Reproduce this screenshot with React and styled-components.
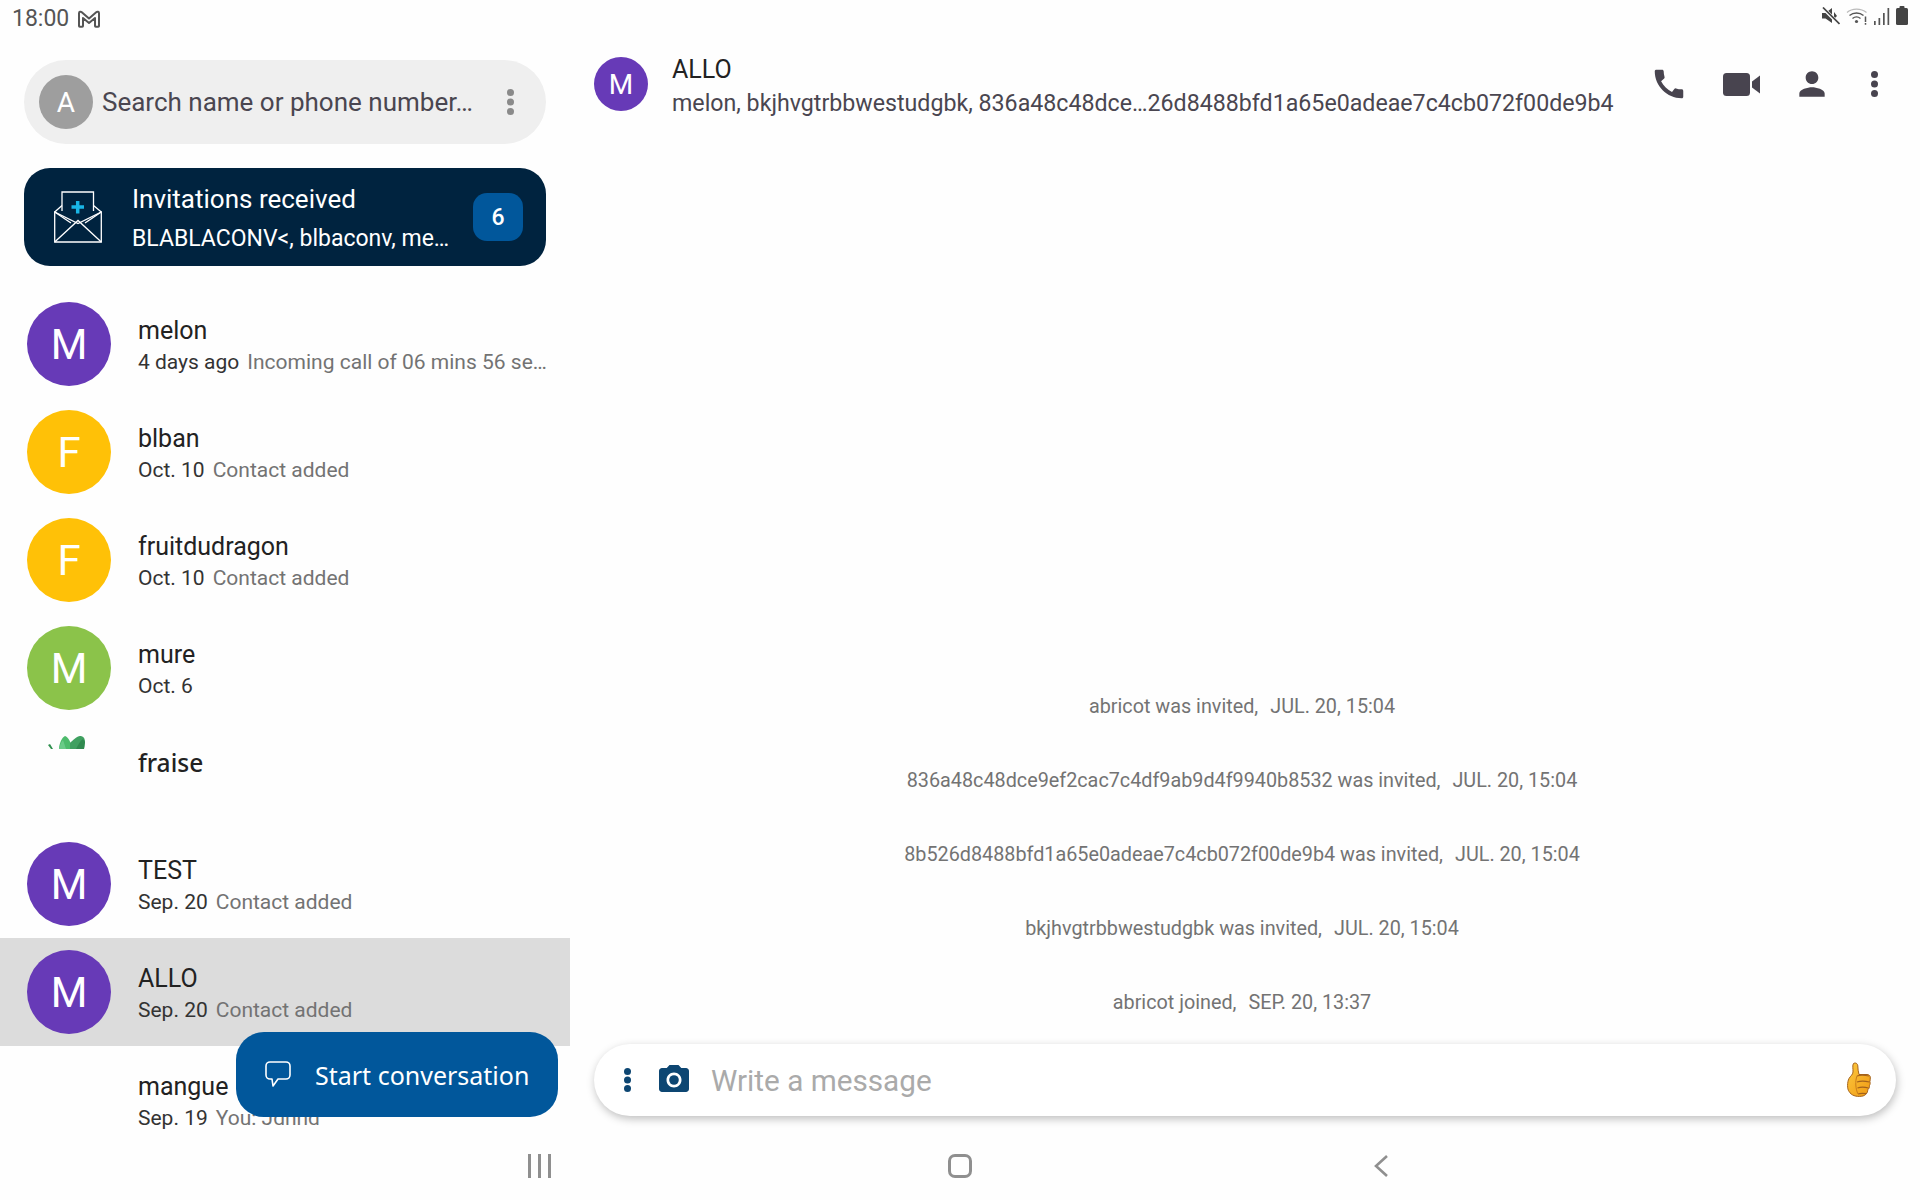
import React from "react";
import styled, { createGlobalStyle } from "styled-components";
import { MdCall, MdPerson, MdPhotoCamera } from "react-icons/md";

const GlobalStyle = createGlobalStyle`
  html, body { margin: 0; padding: 0; background: #fefefe; }
  * { box-sizing: border-box; }
  body { font-family: Roboto, "Liberation Sans", sans-serif; }
`;

const conversations = [
  { name: "melon", letter: "M", color: "#673ab7", date: "4 days ago", text: "Incoming call of 06 mins 56 se…" },
  { name: "blban", letter: "F", color: "#ffc107", date: "Oct. 10", text: "Contact added" },
  { name: "fruitdudragon", letter: "F", color: "#ffc107", date: "Oct. 10", text: "Contact added" },
  { name: "mure", letter: "M", color: "#8bc34a", date: "Oct. 6", text: "" },
  { name: "fraise", leaf: true, special: true },
  { name: "TEST", letter: "M", color: "#673ab7", date: "Sep. 20", text: "Contact added" },
  { name: "ALLO", letter: "M", color: "#673ab7", date: "Sep. 20", text: "Contact added", active: true },
  { name: "mangue", date: "Sep. 19", text: "You: Jdhhd" },
];

const events = [
  ["abricot was invited,", "JUL. 20, 15:04"],
  ["836a48c48dce9ef2cac7c4df9ab9d4f9940b8532 was invited,", "JUL. 20, 15:04"],
  ["8b526d8488bfd1a65e0adeae7c4cb072f00de9b4 was invited,", "JUL. 20, 15:04"],
  ["bkjhvgtrbbwestudgbk was invited,", "JUL. 20, 15:04"],
  ["abricot joined,", "SEP. 20, 13:37"],
];

function GmailIcon() {
  return (
    <svg width="24" height="20" viewBox="0 0 24 20" fill="none" stroke="#555" strokeWidth="2" strokeLinejoin="round">
      <path d="M2 17V4.200c0-1.600 1.700-2 2.800-1L12 9.500l7.200-6.300c1.100-1 2.800-.6 2.800 1V17c0 .5-.3.800-.8.800h-2.400c-.5 0-.8-.3-.8-.8V9L12 14 6 9v8c0 .5-.3.800-.8.800H2.800c-.5 0-.8-.3-.8-.8z" />
    </svg>
  );
}

function MuteIcon() {
  return (
    <svg width="18" height="18" viewBox="0 0 18 18">
      <path d="M0 6h3.500L10 1v15L3.500 11.500H0z" fill="#444" />
      <path d="M12 5l3 4-3 3z" fill="#444" />
      <path d="M1 1l16 16" stroke="#fefefe" strokeWidth="3.500" />
      <path d="M1 .5l16.500 16.500" stroke="#444" strokeWidth="1.700" />
    </svg>
  );
}

function WifiIcon() {
  return (
    <svg width="22" height="18" viewBox="0 0 22 18" fill="none">
      <path d="M1 5.500C6 1 15 1 20.500 5.500" stroke="#bbb" strokeWidth="1.300" />
      <path d="M3.500 8.500c4-3.300 10-3.300 14 0" stroke="#555" strokeWidth="1.400" />
      <path d="M6.500 11.500c2.500-2 5.500-2 8 0" stroke="#555" strokeWidth="1.400" />
      <circle cx="10.500" cy="14.500" r="1.600" fill="#555" />
      <path d="M19.500 9.500v5.500M19.500 16v1.800" stroke="#555" strokeWidth="1.500" />
    </svg>
  );
}

function SignalIcon() {
  return (
    <svg width="16" height="18" viewBox="0 0 16 18" fill="#555">
      <rect x="0" y="14" width="1.700" height="4" />
      <rect x="4.500" y="11" width="1.700" height="7" />
      <rect x="9" y="6" width="1.700" height="12" />
      <rect x="13.500" y="1" width="1.700" height="17" />
    </svg>
  );
}

function BatteryIcon() {
  return (
    <svg width="12" height="19" viewBox="0 0 12 19" fill="#444">
      <rect x="3.500" y="0" width="5" height="3" rx="1" />
      <rect x="0" y="2" width="12" height="17" rx="1.500" />
    </svg>
  );
}

function DotsIcon({ color, size = 7, height = 26 }) {
  return (
    <svg width={size} height={height} viewBox={`0 0 ${size} ${height}`} fill={color}>
      <circle cx={size / 2} cy={size / 2} r={size / 2} />
      <circle cx={size / 2} cy={height / 2} r={size / 2} />
      <circle cx={size / 2} cy={height - size / 2} r={size / 2} />
    </svg>
  );
}

function EnvelopeIcon() {
  return (
    <svg width="48" height="52" viewBox="0 0 48 52" fill="none" stroke="#fff" strokeWidth="1.300">
      <path d="M8 20V1h31.500v19" fill="#00233f" />
      <path d="M.7 21L8 14.500M47.300 21L39.500 14.500" />
      <path d="M.7 21v30h46.600V21L24 32.500z" />
      <path d="M.7 51L24 29.500 47.300 51M.7 21L17 32M47.300 21L31 32" />
      <path d="M17.500 16h12.500M23.700 10v12.500" stroke="#19b5e6" strokeWidth="3.500" />
    </svg>
  );
}

function BubbleIcon() {
  return (
    <svg width="26" height="27" viewBox="0 0 26 27" fill="none" stroke="#fff" strokeWidth="1.600" strokeLinejoin="round">
      <path d="M5 1h16c2.200 0 4 1.800 4 4v9c0 2.200-1.800 4-4 4H13l-5 7-1-7H5c-2.200 0-4-1.800-4-4V5c0-2.200 1.800-4 4-4z" />
    </svg>
  );
}

function VideoIcon() {
  return (
    <svg width="37" height="23" viewBox="0 0 37 23" fill="#48444f">
      <rect x="0" y="0" width="27" height="23" rx="3.500" />
      <path d="M29 8.500L37 2.500v18l-8-6z" />
    </svg>
  );
}

function ThumbIcon() {
  return (
    <svg width="24" height="36" viewBox="0 0 24 36">
      <defs>
        <linearGradient id="thumb" x1="0" y1="0" x2="1" y2="1">
          <stop offset="0" stopColor="#fdc93f" />
          <stop offset="1" stopColor="#f09a13" />
        </linearGradient>
      </defs>
      <path
        d="M6.500 1.500c2-1.200 4.200 0 4.300 2.500.1 2.500.4 5.800 1.200 8.500H20c2.200 0 3.500 1.500 3.300 3.500-.1 1 0 2.500-.4 3.500.5 1.500.3 3-.5 4.200.2 1.500-.4 3-1.600 4-.1 3-2 6-6 6.500-6 .8-10.500-.8-12.800-4.800C0 27 .2 20 2 16.500c1.500-2.500 3.800-3.800 4-6.500.2-3-.8-6.800.5-8.500z"
        fill="url(#thumb)"
        stroke="#a4621b"
        strokeWidth="1"
      />
      <path d="M10 14c2-1 8-1 12 0M10 20c3-1 8-1 12.500 0M10.500 26c3-1 7-1 11 0M11 32c2-.8 5-.8 8-.4" fill="none" stroke="#a4621b" strokeWidth="1.200" />
      <path d="M10 14c-2 5-1.500 13 1 18" fill="none" stroke="#c97d1b" strokeWidth="1" />
    </svg>
  );
}

function LeafIcon() {
  return (
    <svg width="38" height="14" viewBox="0 0 38 14">
      <path d="M0 10l2-1 3 5H3z" fill="#2f8f4e" />
      <path d="M11 14c0-5 3-12 6-13 3 1 5 5 6 8l-1 5z" fill="#4dbb6c" />
      <path d="M11 14c1-4 2-7 4-9l3 9z" fill="#6acb88" />
      <path d="M22 14V8c3-3 7-7 10-7s5 2 5 6l-1 7z" fill="#3fa060" />
      <path d="M28 14c2-4 4-8 7-10l2 3-1 7z" fill="#308a4f" />
    </svg>
  );
}

export default function App() {
  return (
    <Screen>
      <GlobalStyle />
      <StatusBar>
        <StatusLeft>
          <Clock>18:00</Clock>
          <GmailIcon />
        </StatusLeft>
        <StatusRight>
          <MuteIcon />
          <WifiIcon />
          <SignalIcon />
          <BatteryIcon />
        </StatusRight>
      </StatusBar>

      <Body>
        <Sidebar>
          <SearchBar>
            <SearchAvatar>A</SearchAvatar>
            <SearchText>Search name or phone number…</SearchText>
            <DotsIcon color="#8a8a8a" />
          </SearchBar>

          <InviteCard>
            <InviteIcon>
              <EnvelopeIcon />
            </InviteIcon>
            <InviteText>
              <InviteTitle>Invitations received</InviteTitle>
              <InviteNames>BLABLACONV&lt;, blbaconv, me…</InviteNames>
            </InviteText>
            <InviteBadge>6</InviteBadge>
          </InviteCard>

          <List>
            {conversations.map((c) => (
              <Row key={c.name} $active={c.active}>
                <AvatarSlot>
                  {c.letter && <Avatar $color={c.color}>{c.letter}</Avatar>}
                  {c.leaf && (
                    <LeafSlot>
                      <LeafIcon />
                    </LeafSlot>
                  )}
                </AvatarSlot>
                <RowText>
                  <RowName $special={c.special}>{c.name}</RowName>
                  {c.date && (
                    <RowMeta>
                      <RowDate>{c.date}</RowDate>
                      <RowPreview>{c.text}</RowPreview>
                    </RowMeta>
                  )}
                </RowText>
              </Row>
            ))}
          </List>

          <StartButton>
            <BubbleIcon />
            <StartLabel>Start conversation</StartLabel>
          </StartButton>
        </Sidebar>

        <Chat>
          <ChatHeader>
            <HeaderAvatar>M</HeaderAvatar>
            <HeaderText>
              <HeaderTitle>ALLO</HeaderTitle>
              <HeaderMembers>melon, bkjhvgtrbbwestudgbk, 836a48c48dce…26d8488bfd1a65e0adeae7c4cb072f00de9b4</HeaderMembers>
            </HeaderText>
            <HeaderActions>
              <MdCall size={38} color="#48444f" />
              <VideoIcon />
              <MdPerson size={38} color="#48444f" />
              <DotsIcon color="#48444f" />
            </HeaderActions>
          </ChatHeader>

          <Events>
            {events.map(([what, when]) => (
              <EventLine key={what}>
                <span>{what}</span>
                <span>{when}</span>
              </EventLine>
            ))}
          </Events>

          <Composer>
            <DotsIcon color="#0d4672" size={7} height={24} />
            <MdPhotoCamera size={36} color="#0d4672" />
            <ComposerText>Write a message</ComposerText>
            <ThumbIcon />
          </Composer>
        </Chat>
      </Body>

      <NavBar>
        <NavSlot>
          <RecentsIcon>
            <i />
            <i />
            <i />
          </RecentsIcon>
        </NavSlot>
        <NavSlot>
          <HomeIcon />
        </NavSlot>
        <NavSlot>
          <svg width="16" height="24" viewBox="0 0 16 24" fill="none" stroke="#8f8f8f" strokeWidth="2.600">
            <path d="M14 2L3 12l11 10" />
          </svg>
        </NavSlot>
      </NavBar>
    </Screen>
  );
}

const Screen = styled.div`
  width: 1920px;
  height: 1200px;
  display: flex;
  flex-direction: column;
  overflow: hidden;
  background: #fefefe;
`;

const StatusBar = styled.div`
  height: 40px;
  display: flex;
  align-items: flex-start;
  justify-content: space-between;
  padding: 6px 12px 0 12px;
`;

const StatusLeft = styled.div`
  display: flex;
  align-items: center;
  gap: 8px;
`;

const Clock = styled.span`
  font-size: 23px;
  line-height: 26px;
  color: #555;
`;

const StatusRight = styled.div`
  display: flex;
  align-items: center;
  gap: 6px;
`;

const Body = styled.div`
  flex: 1;
  min-height: 0;
  display: flex;
`;

const Sidebar = styled.div`
  position: relative;
  width: 570px;
  flex-shrink: 0;
  display: flex;
  flex-direction: column;
  padding-top: 20px;
`;

const SearchBar = styled.div`
  height: 84px;
  margin: 0 24px;
  padding: 0 32px 0 15px;
  border-radius: 42px;
  background: #efefef;
  display: flex;
  align-items: center;
`;

const SearchAvatar = styled.div`
  width: 54px;
  height: 54px;
  flex-shrink: 0;
  border-radius: 50%;
  background: #9e9e9e;
  color: #fff;
  font-size: 28px;
  display: flex;
  align-items: center;
  justify-content: center;
`;

const SearchText = styled.div`
  flex: 1;
  margin-left: 9px;
  font-size: 26px;
  color: #4a4650;
  white-space: nowrap;
`;

const InviteCard = styled.div`
  height: 98px;
  margin: 24px 24px 0;
  padding: 0 23px 0 30px;
  border-radius: 26px;
  background: #00233f;
  display: flex;
  align-items: center;
`;

const InviteIcon = styled.div`
  width: 78px;
  flex-shrink: 0;
  display: flex;
`;

const InviteText = styled.div`
  flex: 1;
  display: flex;
  flex-direction: column;
  gap: 10px;
  padding-top: 4px;
  color: #fff;
`;

const InviteTitle = styled.div`
  font-size: 26px;
  line-height: 30px;
`;

const InviteNames = styled.div`
  font-size: 23px;
  line-height: 30px;
  white-space: nowrap;
`;

const InviteBadge = styled.div`
  width: 50px;
  height: 48px;
  border-radius: 14px;
  background: #01579b;
  color: #fff;
  font-size: 23px;
  font-weight: 500;
  display: flex;
  align-items: center;
  justify-content: center;
`;

const List = styled.div`
  flex: 1;
  min-height: 0;
  margin-top: 24px;
`;

const Row = styled.div`
  height: 108px;
  padding: 12px 0 0 27px;
  display: flex;
  background: ${(p) => (p.$active ? "#dcdcdc" : "transparent")};
`;

const AvatarSlot = styled.div`
  width: 84px;
  height: 84px;
  flex-shrink: 0;
  margin-right: 27px;
`;

const Avatar = styled.div`
  width: 84px;
  height: 84px;
  border-radius: 50%;
  background: ${(p) => p.$color};
  color: #fff;
  font-size: 42px;
  display: flex;
  align-items: center;
  justify-content: center;
`;

const LeafSlot = styled.div`
  height: 14px;
  padding: 1px 0 0 21px;
  display: flex;
`;

const RowText = styled.div`
  flex: 1;
  min-width: 0;
  padding-top: 14px;
  display: flex;
  flex-direction: column;
  gap: 3px;
`;

const RowName = styled.div`
  font-family: ${(p) => (p.$special ? '"Noto Sans"' : "Roboto")}, sans-serif;
  font-size: ${(p) => (p.$special ? "24.5px" : "25px")};
  line-height: 30px;
  font-weight: ${(p) => (p.$special ? 500 : 400)};
  color: #222;
`;

const RowMeta = styled.div`
  display: flex;
  gap: 8px;
  font-size: 21px;
  line-height: 26px;
  white-space: nowrap;
`;

const RowDate = styled.span`
  color: #333;
`;

const RowPreview = styled.span`
  color: #737373;
`;

const StartButton = styled.div`
  position: absolute;
  left: 236px;
  top: 992px;
  width: 322px;
  height: 85px;
  padding-left: 29px;
  border-radius: 28px;
  background: #01579b;
  display: flex;
  align-items: center;
  gap: 24px;
`;

const StartLabel = styled.span`
  font-family: "Noto Sans", sans-serif;
  font-size: 25px;
  color: #fff;
  white-space: nowrap;
`;

const Chat = styled.div`
  flex: 1;
  min-width: 0;
  display: flex;
  flex-direction: column;
  padding: 0 24px 28px;
`;

const ChatHeader = styled.div`
  height: 88px;
  display: flex;
  align-items: center;
`;

const HeaderAvatar = styled.div`
  width: 54px;
  height: 54px;
  flex-shrink: 0;
  margin-right: 24px;
  border-radius: 50%;
  background: #673ab7;
  color: #fff;
  font-size: 28px;
  display: flex;
  align-items: center;
  justify-content: center;
`;

const HeaderText = styled.div`
  flex: 1;
  min-width: 0;
  display: flex;
  flex-direction: column;
  gap: 3px;
  padding-top: 4px;
`;

const HeaderTitle = styled.div`
  font-size: 25px;
  line-height: 30px;
  color: #222;
`;

const HeaderMembers = styled.div`
  font-size: 23.2px;
  line-height: 30px;
  color: #4a4650;
  white-space: nowrap;
`;

const HeaderActions = styled.div`
  display: flex;
  align-items: center;
  gap: 35px;
  padding-right: 18px;

  & > :nth-child(3) {
    margin-left: -2px;
  }
  & > :last-child {
    margin-left: 5px;
  }
`;

const Events = styled.div`
  flex: 1;
  min-height: 0;
  display: flex;
  flex-direction: column;
  justify-content: flex-end;
  padding: 0 6px 5px 0;
`;

const EventLine = styled.div`
  height: 74px;
  display: flex;
  align-items: center;
  justify-content: center;
  gap: 12px;
  font-size: 19.8px;
  color: #737373;
  white-space: nowrap;
`;

const Composer = styled.div`
  height: 72px;
  flex-shrink: 0;
  padding: 0 25px 0 30px;
  border-radius: 36px;
  background: #fff;
  box-shadow: 1px 3px 8px rgba(0, 0, 0, 0.25);
  display: flex;
  align-items: center;

  & > :nth-child(2) {
    margin-left: 25px;
  }
`;

const ComposerText = styled.div`
  flex: 1;
  margin-left: 19px;
  font-size: 29.7px;
  color: #aaa;
`;

const NavBar = styled.div`
  height: 56px;
  flex-shrink: 0;
  display: grid;
  grid-template-columns: 540px 420px 429px;
  padding-top: 10px;
`;

const NavSlot = styled.div`
  height: 24px;
  display: flex;
  justify-content: flex-end;
`;

const RecentsIcon = styled.div`
  display: flex;
  gap: 7px;
  margin-right: -11px;
  i {
    width: 3px;
    height: 24px;
    background: #8f8f8f;
  }
`;

const HomeIcon = styled.div`
  width: 24px;
  height: 24px;
  margin-right: -12px;
  border: 3px solid #8f8f8f;
  border-radius: 7px;
`;
